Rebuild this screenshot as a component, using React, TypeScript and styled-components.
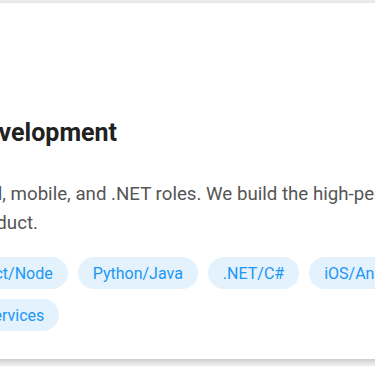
import styled, { createGlobalStyle } from "styled-components";

const GlobalStyle = createGlobalStyle`
  html, body {
    margin: 0;
    padding: 0;
    background: #eeeeee;
    overflow: hidden;
    font-family: Roboto, "Liberation Sans", sans-serif;
  }
`;

const Page = styled.div`
  padding-top: 3px;
  height: 366px;
  box-sizing: border-box;
`;

const Card = styled.div`
  margin-left: -63px;
  width: 584px;
  height: 356px;
  box-sizing: border-box;
  padding: 112px 32px 0;
  background: #fff;
  box-shadow: 0 2px 5px rgba(0, 0, 0, 0.18);
`;

const Title = styled.h3`
  margin: 0 0 29px;
  font-size: 25px;
  line-height: 36px;
  font-weight: 700;
  color: #212121;
`;

const Text = styled.p`
  margin: 0 0 19px;
  font-size: 18.7px;
  line-height: 29px;
  color: #555;
`;

const Tags = styled.div`
  display: flex;
  flex-wrap: wrap;
  gap: 10px;
`;

const Tag = styled.span`
  display: inline-flex;
  align-items: center;
  height: 32px;
  padding: 0 15px;
  border-radius: 16px;
  background: #e3f2fd;
  color: #2196f3;
  font-size: 16px;
`;

const tags = ["Act/Node", "Python/Java", ".NET/C#", "iOS/Android", "Services"];

export default function App() {
  return (
    <Page>
      <GlobalStyle />
      <Card>
        <Title>Development</Title>
        <Text>
          Add, mobile, and .NET roles. We build the high-performance product.
        </Text>
        <Tags>
          {tags.map((t) => (
            <Tag key={t}>{t}</Tag>
          ))}
        </Tags>
      </Card>
    </Page>
  );
}
